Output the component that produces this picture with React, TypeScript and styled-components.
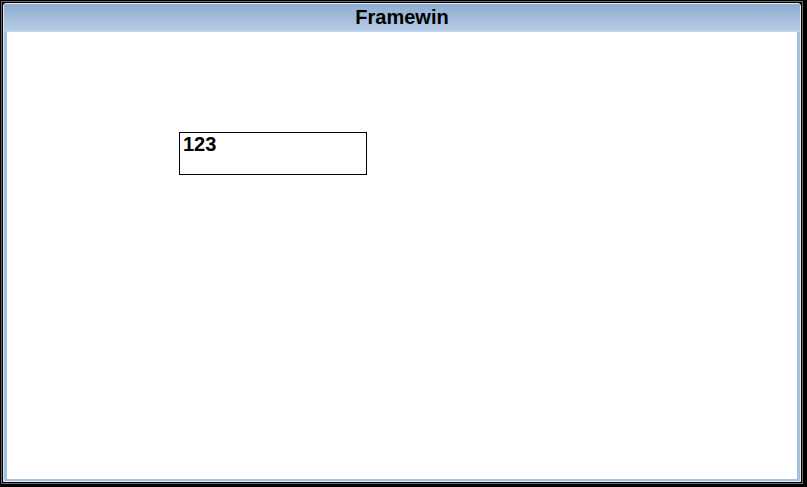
import styled, { createGlobalStyle } from "styled-components";

const GlobalStyle = createGlobalStyle`
  html, body {
    margin: 0;
    padding: 0;
    background: #000;
  }
  body {
    font-family: "Liberation Sans", Arial, sans-serif;
  }
`;

const Screen = styled.div`
  width: 807px;
  height: 487px;
  background: #000;
  padding: 1px 0 0 1px;
  box-sizing: border-box;
`;

// outer 3D bevel line around the frame window
const Bevel = styled.div`
  width: 802px;
  height: 483px;
  box-sizing: border-box;
  border: 1px solid #6a6a6a;
  padding: 1px;
  background: #000;
`;

const FrameWin = styled.div`
  width: 798px;
  height: 479px;
  box-sizing: border-box;
  border: 1px solid #e2eaf4;
  border-radius: 3px 3px 0 0;
  background: #a7c0dd;
  padding: 0 3px 2px 3px;
  display: flex;
  flex-direction: column;
`;

const TitleBar = styled.div`
  height: 27px;
  margin: 0 -3px;
  border-radius: 2px 2px 0 0;
  border-bottom: 1px solid #c3d6ec;
  background: linear-gradient(to bottom, #8fabcf, #b6cde7);
  color: #000;
  font-size: 20px;
  font-weight: bold;
  line-height: 27px;
  text-align: center;
`;

const Client = styled.div`
  flex: 1;
  background: #fff;
  padding: 100px 0 0 172px;
`;

const Edit = styled.div`
  width: 188px;
  height: 43px;
  box-sizing: border-box;
  border: 1px solid #000;
  padding: 1px 3px;
  font-size: 20px;
  font-weight: bold;
  line-height: 20px;
  color: #000;
`;

export default function App() {
  return (
    <>
      <GlobalStyle />
      <Screen>
        <Bevel>
          <FrameWin>
            <TitleBar>Framewin</TitleBar>
            <Client>
              <Edit>123</Edit>
            </Client>
          </FrameWin>
        </Bevel>
      </Screen>
    </>
  );
}
